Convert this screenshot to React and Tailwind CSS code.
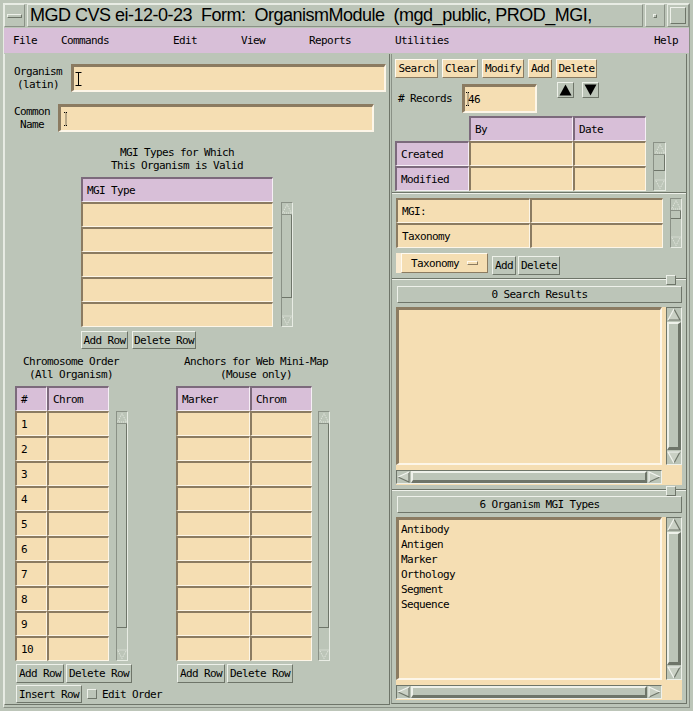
import React from "react";

const gField =
  "bg-[#f5deb3] border-t-[3px] border-l-[3px] border-b-2 border-r-2 border-t-[#8b7b61] border-l-[#8b7b61] border-b-[#fdf6e8] border-r-[#fdf6e8]";
const gCellW =
  "bg-[#f5deb3] border-t-2 border-l-2 border-b border-r border-t-[#8b7b61] border-l-[#8b7b61] border-b-[#fdf6e8] border-r-[#fdf6e8] flex items-center pl-[4px] h-[25px]";
const gCellT =
  "bg-[#d8bfd8] border-t-2 border-l-2 border-b border-r border-t-[#7c6a7c] border-l-[#7c6a7c] border-b-[#f6eef6] border-r-[#f6eef6] flex items-center pl-[4px] h-[25px]";
const gBtn =
  "bg-[#bcc5b8] border border-t-[#eef1ea] border-l-[#eef1ea] border-b-[#6e7569] border-r-[#6e7569] flex items-center justify-center";
const wBtn =
  "bg-[#f5deb3] border border-t-[#fffaf0] border-l-[#fffaf0] border-b-[#8b7b61] border-r-[#8b7b61] flex items-center justify-center";
const tBox =
  "border border-t-[#e8ece4] border-l-[#e8ece4] border-b-[#8a9186] border-r-[#8a9186]";

function Arrow({ dir, w, h }) {
  let pts, light, dark;
  if (dir === "up") {
    pts = `${w / 2},1 ${w - 1},${h - 1} 1,${h - 1}`;
    light = `1,${h - 1} ${w / 2},1`;
    dark = `${w / 2},1 ${w - 1},${h - 1} 1,${h - 1}`;
  } else if (dir === "down") {
    pts = `1,1 ${w - 1},1 ${w / 2},${h - 1}`;
    light = `${w / 2},${h - 1} 1,1 ${w - 1},1`;
    dark = `${w - 1},1 ${w / 2},${h - 1}`;
  } else if (dir === "left") {
    pts = `1,${h / 2} ${w - 1},1 ${w - 1},${h - 1}`;
    light = `1,${h / 2} ${w - 1},1`;
    dark = `${w - 1},1 ${w - 1},${h - 1} 1,${h / 2}`;
  } else {
    pts = `1,1 ${w - 1},${h / 2} 1,${h - 1}`;
    light = `1,${h - 1} 1,1 ${w - 1},${h / 2}`;
    dark = `${w - 1},${h / 2} 1,${h - 1}`;
  }
  return (
    <svg width={w} height={h} viewBox={`0 0 ${w} ${h}`} className="shrink-0 block">
      <polygon points={pts} fill="#c9d0c4" />
      <polyline points={dark} fill="none" stroke="#6e7569" strokeWidth="1.2" />
      <polyline points={light} fill="none" stroke="#f2f4ef" strokeWidth="1.2" />
    </svg>
  );
}

function DotArrow({ dir }) {
  const pts = dir === "up" ? "5,1.5 9.5,10 0.5,10" : "0.5,1 9.5,1 5,9.5";
  return (
    <svg width="10" height="11" viewBox="0 0 10 11" className="shrink-0 block">
      <polygon points={pts} fill="none" stroke="#e8ece4" strokeWidth="1" strokeDasharray="1 1" />
    </svg>
  );
}

function GridScroll({ cls, thumb }) {
  return (
    <div className={`flex flex-col border border-t-[#8a9186] border-l-[#8a9186] border-b-[#e8ece4] border-r-[#e8ece4] shrink-0 ${cls}`}>
      <div className="h-[12px] border-b border-[#8a9186] flex justify-center">
        <DotArrow dir="up" />
      </div>
      <div className="flex-1 flex flex-col">
        <div className={`border-b border-r border-[#6e7569] ${thumb}`} />
      </div>
      <div className="h-[11px] flex justify-center items-end">
        <DotArrow dir="down" />
      </div>
    </div>
  );
}

function VScroll({ cls }) {
  return (
    <div className={`w-[16px] bg-[#bcc5b8] border-t border-l border-t-[#6e7569] border-l-[#6e7569] border-b border-r border-b-[#eef1ea] border-r-[#eef1ea] flex flex-col items-center shrink-0 ${cls}`}>
      <Arrow dir="up" w={14} h={13} />
      <div className="flex-1 w-[14px] mt-[1px] mb-[1px] bg-[#bcc5b8] border-t-2 border-l-2 border-t-[#eef1ea] border-l-[#eef1ea] border-b-[3px] border-r-[3px] border-b-[#6e7569] border-r-[#6e7569]" />
      <Arrow dir="down" w={14} h={13} />
    </div>
  );
}

function HScroll({ cls }) {
  return (
    <div className={`bg-[#bcc5b8] border-t border-l border-t-[#6e7569] border-l-[#6e7569] border-b border-r border-b-[#eef1ea] border-r-[#eef1ea] flex items-center ${cls}`}>
      <Arrow dir="left" w={13} h={12} />
      <div className="flex-1 h-[12px] ml-[1px] mr-[1px] bg-[#bcc5b8] border-t-2 border-l-2 border-t-[#eef1ea] border-l-[#eef1ea] border-b-[3px] border-r-2 border-b-[#6e7569] border-r-[#6e7569]" />
      <Arrow dir="right" w={13} h={12} />
    </div>
  );
}

function IBeam({ dotted }) {
  return (
    <svg width="7" height="14" viewBox="0 0 7 14" className="block shrink-0">
      <path
        d="M0.5 0.5h6M3.5 0.5v13M0.5 13.5h6"
        stroke="#000"
        fill="none"
        strokeDasharray={dotted ? "1 1" : undefined}
      />
    </svg>
  );
}

function DotBeam() {
  return (
    <svg width="4" height="14" viewBox="0 0 4 14" className="block shrink-0">
      <path d="M0 0.5h4M2 0.5v13M0 13.5h4" stroke="#000" fill="none" strokeDasharray="1 1" />
    </svg>
  );
}

function Sash() {
  return (
    <div className="relative h-[2px] border-t border-t-[#6e7569] border-b border-b-[#eef1ea]">
      <div className="absolute left-[274px] top-[-4px] w-[10px] h-[10px] bg-[#bcc5b8] border border-t-[#eef1ea] border-l-[#eef1ea] border-b-[#6e7569] border-r-[#6e7569]" />
    </div>
  );
}

function GridRows({ n, widths, label }) {
  const rows = [];
  for (let i = 0; i < n; i++) {
    rows.push(
      <div key={i} className="flex">
        {widths.map((w, j) => (
          <div key={j} className={`${gCellW} ${w}`}>
            {label && j === 0 ? String(i + 1) : ""}
          </div>
        ))}
      </div>
    );
  }
  return rows;
}

export default function App() {
  return (
    <div className="w-[693px] h-[711px] bg-[#bcc5b8] overflow-hidden p-[3px] font-['DejaVu_Sans_Mono',monospace] text-[11px] tracking-[-0.62px] leading-[13px] text-black">
      <div className="h-[705px] border border-t-[#e8ece4] border-l-[#e8ece4] border-b-[#8a9186] border-r-[#8a9186] flex flex-col">
        {/* Title bar */}
        <div className="flex h-[23px] shrink-0">
          <div className={`w-[21px] ${tBox} flex items-center justify-center`}>
            <div className="w-[15px] h-[4px] border border-t-[#eef1ea] border-l-[#eef1ea] border-b-[#6e7569] border-r-[#6e7569]" />
          </div>
          <div className={`ml-[2px] w-[616px] ${tBox} overflow-hidden flex items-center pl-[2px] font-['Liberation_Sans',Arial,sans-serif] text-[18px] tracking-[-0.5px] whitespace-pre`}>
            MGD CVS ei-12-0-23  Form:  OrganismModule  (mgd_public, PROD_MGI,
          </div>
          <div className={`ml-[2px] w-[20px] ${tBox} flex items-center justify-center`}>
            <div className="w-[4px] h-[4px] border border-t-[#eef1ea] border-l-[#eef1ea] border-b-[#6e7569] border-r-[#6e7569]" />
          </div>
          <div className={`ml-[2px] w-[22px] ${tBox} flex items-center justify-center`}>
            <div className="w-[16px] h-[17px] border border-t-[#eef1ea] border-l-[#eef1ea] border-b-[#6e7569] border-r-[#6e7569]" />
          </div>
        </div>

        {/* Menu bar */}
        <div className="mt-[1px] h-[25px] bg-[#d8bfd8] flex items-center pl-[9px] pr-[11px] shrink-0">
          <div className="w-[48px]">File</div>
          <div className="w-[112px]">Commands</div>
          <div className="w-[68px]">Edit</div>
          <div className="w-[68px]">View</div>
          <div className="w-[86px]">Reports</div>
          <div>Utilities</div>
          <div className="ml-auto">Help</div>
        </div>

        {/* Content */}
        <div className="mt-[1px] flex">
          {/* Left panel */}
          <div className="w-[386px] h-[651px] border-l border-l-[#e6eae2] border-r border-r-[#6e7569] border-b border-b-[#6e7569] flex flex-col shrink-0">
            <div className="flex items-center mt-[10px]">
              <div className="ml-[9px] w-[48px] text-center">Organism<br />(latin)</div>
              <div className={`ml-[9px] w-[315px] h-[28px] ${gField} flex items-center pl-[1px]`}>
                <IBeam />
              </div>
            </div>
            <div className="flex items-center mt-[12px]">
              <div className="ml-[9px] w-[36px] text-center">Common<br />Name</div>
              <div className={`ml-[8px] w-[316px] h-[28px] ${gField} flex items-center pl-[3px]`}>
                <DotBeam />
              </div>
            </div>

            <div className="mt-[14px] ml-[76px] w-[192px] text-center">
              MGI Types for Which<br />This Organism is Valid
            </div>
            <div className="flex mt-[5px] ml-[76px]">
              <div className="flex flex-col w-[192px]">
                <div className={`${gCellT} w-[192px]`}>MGI Type</div>
                <GridRows n={5} widths={["w-[192px]"]} />
              </div>
              <GridScroll cls="ml-[8px] mt-[25px] w-[12px] h-[125px]" thumb="h-[83px]" />
            </div>
            <div className="flex gap-[4px] mt-[4px] ml-[76px]">
              <div className={`${gBtn} h-[18px] w-[47px]`}>Add Row</div>
              <div className={`${gBtn} h-[18px] w-[64px]`}>Delete Row</div>
            </div>

            <div className="flex mt-[6px]">
              {/* Chromosome group */}
              <div className="ml-[10px] w-[112px] flex flex-col">
                <div className="text-center">Chromosome Order<br />(All Organism)</div>
                <div className="flex mt-[5px]">
                  <div className="flex flex-col">
                    <div className="flex">
                      <div className={`${gCellT} w-[32px]`}>#</div>
                      <div className={`${gCellT} w-[62px]`}>Chrom</div>
                    </div>
                    <GridRows n={10} widths={["w-[32px]", "w-[62px]"]} label />
                  </div>
                  <GridScroll cls="ml-[7px] mt-[25px] w-[12px] h-[250px]" thumb="h-[204px]" />
                </div>
                <div className="flex gap-[2px] mt-[3px] ml-[1px]">
                  <div className={`${gBtn} h-[19px] w-[48px] shrink-0`}>Add Row</div>
                  <div className={`${gBtn} h-[19px] w-[66px] shrink-0`}>Delete Row</div>
                </div>
                <div className="flex items-center mt-[2px] ml-[1px]">
                  <div className={`${gBtn} h-[18px] w-[66px] shrink-0`}>Insert Row</div>
                  <div className="ml-[5px] w-[10px] h-[10px] shrink-0 border border-t-[#eef1ea] border-l-[#eef1ea] border-b-[#6e7569] border-r-[#6e7569]" />
                  <div className="ml-[5px] whitespace-nowrap">Edit Order</div>
                </div>
              </div>

              {/* Anchors group */}
              <div className="ml-[49px] w-[160px] flex flex-col">
                <div className="text-center">Anchors for Web Mini-Map<br />(Mouse only)</div>
                <div className="flex mt-[5px]">
                  <div className="flex flex-col">
                    <div className="flex">
                      <div className={`${gCellT} w-[74px]`}>Marker</div>
                      <div className={`${gCellT} w-[62px]`}>Chrom</div>
                    </div>
                    <GridRows n={10} widths={["w-[74px]", "w-[62px]"]} />
                  </div>
                  <GridScroll cls="ml-[6px] mt-[25px] w-[12px] h-[250px]" thumb="h-[204px]" />
                </div>
                <div className="flex gap-[2px] mt-[3px] ml-[1px]">
                  <div className={`${gBtn} h-[19px] w-[48px] shrink-0`}>Add Row</div>
                  <div className={`${gBtn} h-[19px] w-[66px] shrink-0`}>Delete Row</div>
                </div>
              </div>
            </div>
          </div>

          {/* Right panel */}
          <div className="ml-[1px] w-[296px] h-[650px] border-l border-l-[#8a9186] border-r border-r-[#6e7569] border-b border-b-[#6e7569] flex flex-col shrink-0">
            {/* Section 1 */}
            <div className="h-[139px] border-b border-b-[#6e7569] flex flex-col shrink-0">
              <div className="flex gap-[4px] mt-[5px] ml-[3px]">
                <div className={`${wBtn} h-[19px] w-[43px]`}>Search</div>
                <div className={`${wBtn} h-[19px] w-[36px]`}>Clear</div>
                <div className={`${wBtn} h-[19px] w-[42px]`}>Modify</div>
                <div className={`${wBtn} h-[19px] w-[24px]`}>Add</div>
                <div className={`${wBtn} h-[19px] w-[41px]`}>Delete</div>
              </div>
              <div className="flex mt-[3px] ml-[6px] h-[32px]">
                <div className="self-end h-[29px] flex items-center w-[54px] whitespace-nowrap"># Records</div>
                <div className={`self-end ml-[10px] w-[75px] h-[29px] ${gField} flex items-center pl-[1px]`}>
                  <DotBeam />
                  <span className="ml-[-2px]">46</span>
                </div>
                <div className={`${gBtn} ml-[20px] mt-[1px] w-[17px] h-[16px]`}>
                  <svg width="13" height="12" viewBox="0 0 13 12"><polygon points="6.5,0.5 12.5,11.5 0.5,11.5" fill="#000" /></svg>
                </div>
                <div className={`${gBtn} ml-[8px] mt-[1px] w-[17px] h-[16px]`}>
                  <svg width="13" height="12" viewBox="0 0 13 12"><polygon points="0.5,0.5 12.5,0.5 6.5,11.5" fill="#000" /></svg>
                </div>
              </div>
              <div className="flex mt-[3px] ml-[3px]">
                <div className="flex flex-col">
                  <div className="flex">
                    <div className="w-[74px] h-[25px]" />
                    <div className={`${gCellT} w-[104px]`}>By</div>
                    <div className={`${gCellT} w-[73px]`}>Date</div>
                  </div>
                  <div className="flex">
                    <div className={`${gCellT} w-[74px]`}>Created</div>
                    <div className={`${gCellW} w-[104px]`} />
                    <div className={`${gCellW} w-[73px]`} />
                  </div>
                  <div className="flex">
                    <div className={`${gCellT} w-[74px]`}>Modified</div>
                    <div className={`${gCellW} w-[104px]`} />
                    <div className={`${gCellW} w-[73px]`} />
                  </div>
                </div>
                <GridScroll cls="ml-[7px] mt-[26px] w-[13px] h-[49px]" thumb="h-[16px]" />
              </div>
            </div>

            {/* Section 2 */}
            <div className="h-[85px] border-t border-t-[#eef1ea] flex flex-col shrink-0">
              <div className="flex mt-[4px] ml-[4px]">
                <div className="flex flex-col">
                  <div className="flex">
                    <div className={`${gCellW} w-[134px]`}>MGI:</div>
                    <div className={`${gCellW} w-[133px]`} />
                  </div>
                  <div className="flex">
                    <div className={`${gCellW} w-[134px]`}>Taxonomy</div>
                    <div className={`${gCellW} w-[133px]`} />
                  </div>
                </div>
                <GridScroll cls="ml-[7px] w-[12px] h-[50px]" thumb="h-[8px]" />
              </div>
              <div className="flex items-start mt-[5px] ml-[4px]">
                <div className="w-[92px] h-[20px] bg-[#f9ead0] pl-[5px] flex">
                  <div className="flex-1 bg-[#f5deb3] border border-t-[#fffaf0] border-l-[#fffaf0] border-b-[#8b7b61] border-r-[#8b7b61] flex items-center pl-[9px]">
                    <span>Taxonomy</span>
                    <div className="ml-[8px] w-[11px] h-[4px] border border-t-[#fffaf0] border-l-[#fffaf0] border-b-[#8b7b61] border-r-[#8b7b61]" />
                  </div>
                </div>
                <div className={`${gBtn} ml-[4px] mt-[3px] w-[24px] h-[19px]`}>Add</div>
                <div className={`${gBtn} ml-[2px] mt-[3px] w-[42px] h-[19px]`}>Delete</div>
              </div>
            </div>

            <Sash />

            {/* Section 3 */}
            <div className="h-[209px] flex flex-col shrink-0">
              <div className={`mt-[6px] ml-[5px] w-[285px] h-[17px] ${gBtn}`}>0 Search Results</div>
              <div className="mt-[4px] ml-[4px] w-[286px] h-[178px] bg-[#f5deb3] flex flex-col">
                <div className="flex h-[158px]">
                  <div className={`w-[266px] h-[158px] ${gField}`} />
                  <VScroll cls="ml-[4px] h-[158px]" />
                </div>
                <HScroll cls="mt-[5px] w-[266px] h-[14px]" />
              </div>
            </div>

            <Sash />

            {/* Section 4 */}
            <div className="h-[211px] flex flex-col shrink-0">
              <div className={`mt-[5px] ml-[5px] w-[285px] h-[17px] ${gBtn}`}>6 Organism MGI Types</div>
              <div className="mt-[4px] ml-[4px] w-[286px] h-[183px] bg-[#f5deb3] flex flex-col">
                <div className="flex h-[163px]">
                  <div className={`w-[266px] h-[163px] ${gField} pl-[2px] pt-[2px] leading-[15px]`}>
                    <div>Antibody</div>
                    <div>Antigen</div>
                    <div>Marker</div>
                    <div>Orthology</div>
                    <div>Segment</div>
                    <div>Sequence</div>
                  </div>
                  <VScroll cls="ml-[4px] h-[163px]" />
                </div>
                <HScroll cls="mt-[5px] w-[266px] h-[14px]" />
              </div>
            </div>
          </div>
        </div>
      </div>
    </div>
  );
}
